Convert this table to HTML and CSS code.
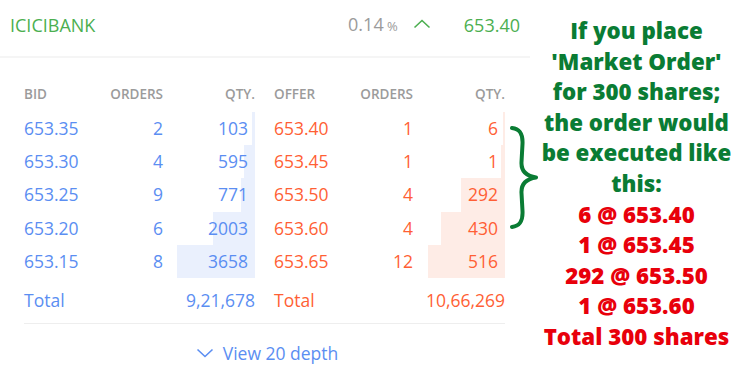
FILE: index.html
```html
<!DOCTYPE html>
<html>
<head>
<meta charset="utf-8">
<link rel="stylesheet" href="styles.css">
</head>
<body>
<div class="page">
  <div class="widget">
    <div class="head">
      <span class="symbol">ICICIBANK</span>
      <div class="quote">
        <span class="chg">0.14<span class="pct"> %</span></span>
        <svg class="caret" width="18" height="10" viewBox="0 0 18 10"><path d="M1.5 8.5 L9 1.5 L16.5 8.5" fill="none" stroke="#4caf50" stroke-width="1.6"/></svg>
        <span class="ltp">653.40</span>
      </div>
    </div>
    <div class="book">
      <div class="sides">
        <div class="side bid">
          <div class="row th"><span>Bid</span><span class="r">Orders</span><span class="r q">Qty.</span></div>
          <div class="row"><span>653.35</span><span class="r">2</span><span class="r q bar" style="--w:3px">103</span></div>
          <div class="row"><span>653.30</span><span class="r">4</span><span class="r q bar" style="--w:11px">595</span></div>
          <div class="row"><span>653.25</span><span class="r">9</span><span class="r q bar" style="--w:14px">771</span></div>
          <div class="row"><span>653.20</span><span class="r">6</span><span class="r q bar" style="--w:42px">2003</span></div>
          <div class="row"><span>653.15</span><span class="r">8</span><span class="r q bar" style="--w:78px">3658</span></div>
        </div>
        <div class="side ask">
          <div class="row th"><span>Offer</span><span class="r">Orders</span><span class="r q">Qty.</span></div>
          <div class="row"><span>653.40</span><span class="r">1</span><span class="r q bar" style="--w:2px">6</span></div>
          <div class="row"><span>653.45</span><span class="r">1</span><span class="r q bar" style="--w:4px">1</span></div>
          <div class="row"><span>653.50</span><span class="r">4</span><span class="r q bar" style="--w:44px">292</span></div>
          <div class="row"><span>653.60</span><span class="r">4</span><span class="r q bar" style="--w:64px">430</span></div>
          <div class="row"><span>653.65</span><span class="r">12</span><span class="r q bar" style="--w:77px">516</span></div>
        </div>
      </div>
      <div class="totals">
        <div class="total bid"><span>Total</span><span>9,21,678</span></div>
        <div class="total ask"><span>Total</span><span>10,66,269</span></div>
      </div>
    </div>
    <div class="more">
      <svg width="18" height="10" viewBox="0 0 18 10"><path d="M1.5 1.5 L9 8.5 L16.5 1.5" fill="none" stroke="#5b8ef2" stroke-width="1.6"/></svg>
      <span>View 20 depth</span>
    </div>
  </div>
  <svg class="brace" width="30" height="104" viewBox="0 0 30 104">
    <path d="M2,2 C10,3 13,8 12.5,18 L11.5,36 C11,45 16,50 26,51.5 C16,53 11,58 11.5,67 L12.5,85 C13,95 10,100 2,101" fill="none" stroke="#0a7c34" stroke-width="4" stroke-linecap="round" stroke-linejoin="round"/>
  </svg>
  <div class="note">
    <p class="green">If you place<br>'Market Order'<br>for 300 shares;<br>the order would<br>be executed like<br>this:</p>
    <p class="red">6 @ 653.40<br>1 @ 653.45<br>292 @ 653.50<br>1 @ 653.60<br>Total 300 shares</p>
  </div>
</div>
</body>
</html>
```
FILE: styles.css
```css
* { box-sizing: border-box; }
html, body { margin: 0; padding: 0; background: #fff; }
body { font-family: "Open Sans", "DejaVu Sans", sans-serif; width: 740px; height: 375px; overflow: hidden; }
.page { position: relative; display: flex; width: 740px; height: 375px; }
.widget { width: 530px; flex: none; }
.head { height: 58px; padding: 10px 10px 0 10px; display: flex; justify-content: space-between; align-items: flex-start; border-bottom: 2px solid #f5f5f5; }
.symbol { font-size: 18px; line-height: 30px; color: #4caf50; }
.quote { display: flex; align-items: center; height: 30px; }
.chg { font-size: 18px; color: #9b9b9b; line-height: 30px; }
.pct { font-size: 13px; }
.caret { margin-left: 15px; margin-top: -2px; }
.ltp { font-size: 18px; color: #4caf50; margin-left: 33px; line-height: 30px; }
.book { padding: 18px 25px 0 24px; }
.sides, .totals { display: flex; gap: 19px; }
.totals { border-bottom: 1px solid #eeeeee; }
.side { width: 231px; }
.row { display: grid; grid-template-columns: 86px 53px 92px; height: 33.2px; align-items: center; font-size: 17.5px; }
.row > span { line-height: 33.2px; height: 33.2px; }
.row .q { margin-left: 14px; }
.row.th { height: 36px; font-size: 13.5px; font-weight: 600; text-transform: uppercase; color: #9b9b9b; }
.row.th > span { line-height: 36px; height: 36px; }
.r { text-align: right; }
.q.bar { padding-right: 7px; }
.bid .row:not(.th) { color: #5b8ef2; }
.ask .row:not(.th) { color: #ff5f35; }
.bid .bar { background: linear-gradient(to left, #eaf0fd var(--w), transparent var(--w)); }
.ask .bar { background: linear-gradient(to left, #feece6 var(--w), transparent var(--w)); }
.total { width: 231px; display: flex; justify-content: space-between; height: 45px; align-items: center; font-size: 17.5px; }
.total.bid { color: #5b8ef2; }
.total.ask { color: #ff5f35; }
.more { display: flex; justify-content: center; align-items: center; gap: 9px; height: 58px; font-size: 17.5px; color: #5b8ef2; padding-left: 4px; }
.brace { position: absolute; left: 510px; top: 126px; }
.note { flex: 1; padding-top: 16px; padding-left: 3px; text-align: center; font-size: 22.3px; font-weight: 800; line-height: 30.6px; }
.note p { margin: 0; }
.green { color: #0a7c34; }
.red { color: #e8000b; }
```
